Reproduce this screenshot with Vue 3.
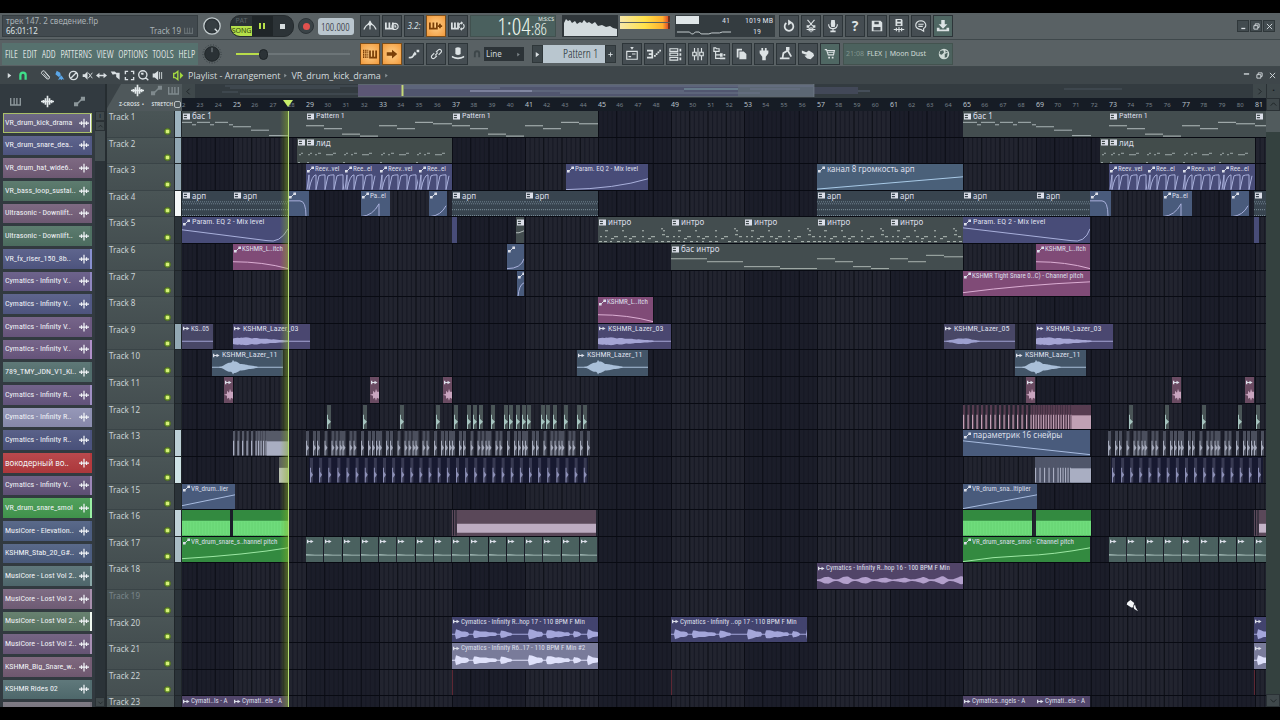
<script setup>
import { h, ref } from 'vue'

const icons = {
  metronome: [['M1 12Q3 7 7 5.500M15 12Q13 7 9 5.500M8 2V12', 's'], ['M5 6L8 2L11 6L8 8Z', 'f']],
  pianoClock: [['M1 4V11H9V4M5 4V10', 's2'], ['M15 8.500A3.500 3.500 0 1 1 8 8.500A3.500 3.500 0 1 1 15 8.500M11.500 6.500V9H13', 's']],
  pianoPlus: [['M1 4V11H9V4M5 4V10', 's2'], ['M10 8H15M12.500 5.500V10.500', 's2']],
  pianoLoop: [['M1 4V11H8V4M4.500 4V10', 's2'], ['M10 10A3.200 3.200 0 0 1 12 4.500M14 6A3.200 3.200 0 0 1 12 11.500', 's'], ['M11.500 2.500L14 4.500L11.500 6.500ZM12.500 9.500L10 11.500L12.500 13.500Z', 'f']],
  typing: [['M0 4H6M0 6.500H6M0 9H6M0 11.500H6', 'dash'], ['M8 4V12H15V4M11.500 4V11', 's2']],
  arrow: [['M2 6H8V3L14 8L8 13V10H2Z', 'f']],
  glide: [['M2 12Q7 13 8 8', 's2'], ['M7 8L9 5L11 8L9 10ZM11 3H14V6H11Z', 'f']],
  link: [['M7 9.500L10 6.500M6 7L3 10A2.200 2.200 0 0 0 6 13L9 10M8 6L11 3A2.200 2.200 0 0 1 14 6L11 9', 's']],
  stamp: [['M5 1Q8 -0.500 11 1L11 8Q8 10 5 8ZM1 10Q8 14 15 10V12Q8 16 1 12Z', 'f']],
  magnet: [['M3 13V7A5 5 0 0 1 13 7V13H10V7A2 2 0 0 0 6 7V13Z', 'f']],
  loop: [['M5 4.500A5 5 0 1 0 11 4.500', 's2'], ['M7 0.500L12 4L7 7.500Z', 'f']],
  cut: [['M4 1L10 8M12 1L6 8M3 12H13M6 10V14M8 9V15M10 10V14', 's'], ['M3 7H6V10H3ZM10 7H13V10H10Z', 'f']],
  mic: [['M6 1H10Q11 5 10 9H6Q5 5 6 1ZM5 13H11V15H5Z', 'f'], ['M3 6Q3 11 8 11Q13 11 13 6M8 11V14', 's']],
  save: [['M2 2H12L14 4V14H2ZM5 3V6H10V3ZM4 9V13H12V9Z', 'f']],
  saveWave: [['M4 0H11L12 1V8H4ZM6 1V3H10V1ZM6 5V7H10V5Z', 'f'], ['M2 12H14M5 10V14M8 9V15M11 10V14', 's']],
  chat: [['M8 2A6 5 0 1 0 8 12L11 14V11A6 5 0 0 0 8 2ZM5 6H11M5 8.500H10', 's']],
  download: [['M6 1H10V6H13L8 11L3 6H6ZM1 10H4V12H12V10H15V14H1Z', 'f']],
  playlist: [['M2 5H14V14H2ZM4 11H7M8 8H12', 's'], ['M6 0H10L8 3Z', 'f']],
  steps: [['M0 3H7V13H0V11H5V9H2V7H5V5H0ZM8 9H10V11H8ZM10 7H12V9H10ZM12 5H14V7H12ZM14 3H16V5H14Z', 'f']],
  rack: [['M1 2H10V5H1ZM1 7H10V10H1ZM1 12H10V15H1Z', 's'], ['M12 2H14V5H12ZM12 7H14V10H12ZM12 12H14V15H12Z', 'f']],
  mixer: [['M4 1V6M4 10V15M8 1V15M12 1V6M12 10V15', 's'], ['M2 6H6V10H2ZM10 6H14V10H10Z', 's']],
  tree: [['M1 1H3L4 2H7V5H1ZM3 5V13H8M3 9H8', 's'], ['M8 7H11V11H8ZM8 12H14V14H8ZM12 8H14V10H12Z', 'f']],
  copy: [['M2 2H8V4H4V12H2ZM5 5H10L13 8V14H5Z', 'f']],
  plug: [['M5 1H7V4H9V1H11V4H13V7L10 11V15H6V11L3 7V4H5Z', 'f']],
  robot: [['M4 13L5 7L10 4L14 11', 's2'], ['M1 12H12V14H1ZM8 0H12V4H8Z', 'f']],
  hand: [['M1 4L6 6L9 4L14 7L15 10L11 14L7 13L4 10L7 9L1 7Z', 'f']],
  cart: [['M2 3H4L6 9H12L13 4H5M6 6H13', 's'], ['M6 11H8V13H6ZM10 11H12V13H10Z', 'f']],
  globe: [['M8 1A7 7 0 1 0 8 15A7 7 0 1 0 8 1ZM3 4L7 3L8 6L5 9L2 8ZM9 8L13 6L12 12L9 13ZM10 3L13 5L10 6Z', 'f']],
  pencil: [['M3 2L6 1L14 10L13 13L10 13L2 5ZM5 5L11 12M7 3L13 10', 's']],
  brush: [['M4 1L9 4L10 8L7 10L2 6ZM8 10L11 8L15 14L12 13L11 15L9 13L6 15Z', 'f']],
  no: [['M8 2A6 6 0 1 0 8 14A6 6 0 1 0 8 2ZM4 12L12 4', 's2']],
  mute: [['M1 6H4L8 2V14L4 10H1Z', 'f'], ['M9 4L15 12M15 4L9 12', 's']],
  slip: [['M0 8L5 4V7H11V4L16 8L11 12V9H5V12Z', 'f']],
  slice: [['M1 2H7L9 4H14V14L9 10V6H6L4 7Z', 'f']],
  select: [['M2 6V2H6M10 2H14V6M14 10V14H10M6 14H2V10', 's2']],
  zoom: [['M7 1A6 6 0 1 0 7 13A6 6 0 1 0 7 1ZM11 11L15 15', 's2'], ['M4 4H8V7H5Z', 'f']],
  speaker: [['M1 5H4L9 1V15L4 11H1Z', 'f'], ['M11 3V13M14 3V13', 's']],
  sound: [['M7 2L3 5H1V11H3L7 14Z', 's2'], ['M10 3L15 8L10 13Z', 'f']],
  piano: [['M1 3V13H15V3M6 3V12M10 3V12', 's2']],
  wave: [['M0 8H16M3 6V10M5.500 4V12M8 1V15M10.500 4V12M13 6V10', 's2']],
  smallWave: [['M0 8H16M4 5V11M8 1V15M12 5V11', 's2']],
  auto: [['M4 12L12 4', 's2'], ['M0 9H6V15H0ZM10 1H16V7H10Z', 'f']],
  pattern: [['M0 1H16V15H0ZM2 4V7H9V4ZM2 9V12H9V9Z', 'f']],
  audio: [['M0 4H3V7H8V4L15 8L8 12V9H3V12H0Z', 'f']],
  min: [['M3 11H12V14H3Z', 'f']],
  minTop: [['M2 3H14V6H2Z', 'f']],
  restore: [['M2 6H11V14H2ZM5 6V2H14V10H11', 's2']],
  close: [['M2 2L14 14M14 2L2 14', 's2']],
  left: [['M10 3L5 8L10 13', 's']],
  right: [['M6 3L11 8L6 13', 's']],
  up: [['M3 10L8 5L13 10', 's']],
  down: [['M3 6L8 11L13 6', 's']],
  tri: [['M4 2L12 8L4 14Z', 'f']],
  plus: [['M3 8H13M8 3V13', 's2']],
  cursor: [['M2 3L6 0L11 4L9 10L7 10L1 6ZM10 9L12 6L13 10L16 15L11 12Z', 'f']]
}
const Icon = (props) =>
  h('svg', { viewBox: '0 0 16 16', 'aria-hidden': 'true' }, icons[props.n].map(([d, m]) =>
    h('path', m === 'f'
      ? { d, fill: 'currentColor', 'fill-rule': 'evenodd' }
      : { d, fill: 'none', stroke: 'currentColor', 'stroke-width': m === 's' ? 1.3 : 2, 'stroke-dasharray': m === 'dash' ? '1.500 1' : null })))
Icon.props = ['n']

const menu = ['FILE', 'EDIT', 'ADD', 'PATTERNS', 'VIEW', 'OPTIONS', 'TOOLS', 'HELP']
const recTools = [['metronome'], ['pianoClock'], ['count'], ['pianoPlus', 1], ['pianoLoop']]
const editTools = [['typing', 1], ['arrow', 1], ['glide'], ['link'], ['stamp']]
const fileTools = ['loop', 'cut', 'mic', 'help', 'save', 'saveWave', 'chat', 'download']
const viewTools = ['playlist', 'steps', 'rack', 'mixer', 'tree', 'copy', 'plug', 'robot', 'hand', 'cart']
const plTools = ['pencil', 'brush', 'no', 'mute', 'slip', 'slice', 'select', 'zoom', 'speaker']
const tempo = ref('100.000')
const volume = ref(22)
const snap = ref('Line')

const picker = [
  ['VR_drum_kick_drama', '#625d7c', '#f2f4f6'], ['VR_drum_snare_dea..', '#515884'], ['VR_drum_hat_wide6..', '#735d78'],
  ['VR_bass_loop_sustai..', '#507163'], ['Ultrasonic - Downlift..', '#735d78'], ['Ultrasonic - Downlift..', '#4f7163'],
  ['VR_fx_riser_150_8b..', '#515884', '#8890d0'], ['Cymatics - Infinity V..', '#615682', '#9087c0'], ['Cymatics - Infinity V..', '#515884'],
  ['Cymatics - Infinity V..', '#6b5880'], ['Cymatics - Infinity V..', '#6b5880', '#b08fc8'], ['789_TMY_JDN_V1_Ki..', '#516d6c'],
  ['Cymatics - Infinity R..', '#665680', '#a08fc4'], ['Cymatics - Infinity R..', '#8d8fb2'], ['Cymatics - Infinity R..', '#4c547f'],
  ['вокодерный во..', '#b43a3e'], ['Cymatics - Infinity V..', '#62537a', '#9c86b8'], ['VR_drum_snare_smol', '#43994f', '#9af0a4'],
  ['MusiCore - Elevation..', '#4c5d80'], ['KSHMR_Stab_20_G#..', '#4c5d80'], ['MusiCore - Lost Vol 2..', '#526b70', '#8aa8a8'],
  ['MusiCore - Lost Vol 2..', '#74607a', '#a88fae'], ['MusiCore - Lost Vol 2..', '#5b7764', '#f0f8f0'], ['MusiCore - Lost Vol 2..', '#6a587a', '#a88fb4'],
  ['KSHMR_Big_Snare_w..', '#745c74'], ['KSHMR Rides 02', '#526d70'], ['', '#74707a']
]

/* timeline scale: bar 22 sits four pixels before the left edge */
const BAR = 18.25
const LEFT = 182
const barX = (b) => 598 - LEFT + (b - 45) * BAR
const bars = Array.from({ length: 60 }, (_, i) => i + 22)
const numbers = bars.map((n) => ({ n: n === 22 ? '2' : n, x: Math.max(0, barX(n)), major: n % 4 === 1 }))

/* clip artwork */
const notes = (list, o = 0) => list.map(([x, y, w]) => `M${x + o} ${y}h${w}`).join('')
const line = (d, s = '#a9b0dc') => ({ d, s })
const wave = (w, env, f, mid = 17.5, from = 0) => {
  let a = '', b = ''
  for (let x = from; x <= w; x++) {
    const e = Math.max(0.4, env(x) * (0.8 + 0.2 * Math.abs(Math.sin(x * 12.9))))
    a += `${a ? 'L' : 'M'}${x} ${(mid - e).toFixed(1)}`
    b = `L${x} ${(mid + e).toFixed(1)}` + b
  }
  return { d: a + b + 'Z', f }
}
const hits = (xs, w, bg, fg, full) => [
  { d: xs.map((x) => `M${x} 1h${w}v25h-${w}Z`).join(''), f: bg },
  { d: xs.map((x) => full ? `M${x} 11h${w / 2}v15h-${w / 2}Z` : `M${x} 11h1v4l${w - 1} 3l-${w - 1} 3v5h-1Z`).join(''), f: fg }
]
const bass = () => [line(notes([[0, 11.5, 14], [14, 14, 4], [18, 11.5, 14], [32, 14, 4], [37, 11.5, 13], [50, 14, 4], [55, 11.5, 13], [69, 14, 4], [73, 16, 18], [91, 19.5, 18], [109, 25, 19]]), '#aab4b6')]
const patt = () => [line(notes([[0, 15, 18], [18, 18, 18], [36, 23.5, 18], [54, 25.5, 18], [73, 15, 18], [91, 18, 18], [109, 11.5, 18], [127, 13, 19]]), '#b4bdbe')]
const leadNotes = [0, 36, 73, 109].flatMap((o) => [[2, 17, 2], [4, 15.5, 2], [9, 17, 2], [12, 15.5, 3], [20, 17, 5], [25, 17, 2], [27, 15.5, 3], [1, 25, 2]].map(([x, y, w]) => [x + o, y, w]))
const lead = () => [line(notes(leadNotes), '#9fa9a9')]
const arp = (w) => [{ d: `M0 11H${w}M1 13H${w}`, s: '#6f828f', dash: '1 1' }, { d: `M0 19H${w}M0 25H${w}`, s: '#7c8f9b', dash: '1 1' }]
const intro = () => [line(notes([[2, 20, 2], [1, 25, 3], [7, 14, 3], [7, 20, 2], [6, 25, 3], [13, 22, 3], [16, 20, 4], [12, 25, 2], [19, 25, 3], [24, 14, 2], [26, 20, 3], [25, 25, 2], [31, 22, 3], [34, 20, 4], [31, 25, 2], [38, 25, 3], [44, 14, 2], [44, 20, 2], [44, 25, 3], [50, 22, 3], [53, 20, 4], [57, 25, 3], [63, 12, 2], [65, 14, 2], [64, 18, 3], [68, 20, 3], [63, 25, 3], [69, 25, 3]]), '#b4beb9')]
const bassIntro = () => [line(notes([[0, 15, 36], [36, 18, 36], [73, 23, 36], [109, 25, 37], [146, 15, 18], [164, 18, 18], [182, 23, 18], [200, 25, 18], [219, 15, 18], [237, 18, 18], [255, 11.5, 18], [273, 13, 19]]), '#aab4b0')]
const verb = (w) => {
  let d = `M1 26L3 11V26`
  for (let x = 5; x < w - 5; x += 9) d += `Q${x + 1} 11 ${x + 5} 11V26L${x + 8} 12`
  return [line(d)]
}
const spike = () => [line('M0 26Q12 25 18 13V26H22')]
const lz3 = () => [wave(77, (x) => x < 8 ? 3.5 : Math.max(0.4, 5 * (1 - x / 66)), '#a5a5d4')]
const lz5 = () => [wave(71, (x) => 3.2 * Math.exp(-(((x - 19) / 13) ** 2)), '#9da0cf')]
const lz11 = () => [wave(72, (x) => (x === 21 ? 8 : 6 * Math.exp(-(((x - 21) / 9) ** 2)) + 2 * Math.exp(-(((x - 36) / 9) ** 2))), '#a9bfd8')]
const vox = (w, f, cut = 0) => {
  const bumps = [[4, 16, 5], [22, 44, 4], [49, 59, 4], [77, 90, 5.5], [95, 117, 4.5], [122, 128, 4], [136, 146, 5]]
  return [wave(w, (x) => {
    const b = bumps.find(([s, e]) => x + cut >= s && x + cut <= e)
    return b ? b[2] * (1 - 0.6 * (x + cut - b[0]) / (b[1] - b[0])) : 0.4
  }, f)]
}
const star = () => [{ d: 'M0 18L3 17L3 14L5 16L6 12L7 15H9V22L7 21L6 24L5 21L3 22V19Z', f: '#c9a5bf' }]
const kicks = (from, to) => {
  const out = []
  for (let s = 0; s < to - from; s += 36.5) for (const o of [0, 7, 11, 18.5, 25.5, 29.5, 33.5]) if (s + o < to - from - 2) out.push(s + o)
  return hits(out, 3, '#4b4f5d', '#a6abbc')
}
const claps = (w) => {
  const out = []
  for (let x = 1; x < w; x += 9.125) out.push(x)
  return hits(out, 3, '#383a52', '#8e91b8')
}
const roll = (w, solid, bg, fg) => {
  const xs = []
  for (let x = 0; x < solid; x += x > solid * 0.6 ? 2.5 : 4.5) xs.push(x)
  return [...hits(xs, 2.2, bg, fg, true), { d: `M${solid} 1H${w}V26H${solid}Z`, f: bg }, { d: `M${solid} 11.500H${w}V26H${solid}Z`, f: fg }]
}

const C = { pat: '#434d4f', lead: '#424c4b', arp: '#38444f', auto: '#484c78', blue: '#495b7c', sky: '#4a6079', pink: '#804b77', laz: '#4a4770', laz5: '#484766', steel: '#435568', rose: '#6a4b62', green: '#338a40', teal: '#4a615f', vio: '#514468', vox: '#42436e', light: '#797b9a', none: 'transparent' }
const c = (x, e, kind, color, label = '', art = [], cut = 0) => ({ x: x - LEFT, w: e - x, kind, color, label, art, cut })
const eq = () => [line('M0 13L85 24Q98 27 106 12')]
const greens = (w) => [{ d: `M0 11H${w}V26H0Z`, f: '#6fdc7c' }, { d: Array.from({ length: Math.floor(w / 3) }, (_, i) => `M${i * 3 + 1} 12V26`).join(''), s: '#67d474' }]
const cells = (x, n) => Array.from({ length: n }, (_, i) => c(x + i * BAR, x + (i + 1) * BAR - 1, 'audio', C.teal, '', [{ d: 'M0 17.500L9 18H17V18.800H0Z', f: '#b8d0cc' }]))
const verbs = (o) => [c(306 + o, 344 + o, 'auto', C.auto, 'Reev..vel', verb(38)), c(344 + o, 379 + o, 'auto', C.auto, 'Ree..el', verb(35)), c(379 + o, 418 + o, 'auto', C.auto, 'Reev..vel', verb(39)), c(418 + o, 452 + o, 'auto', C.auto, 'Ree..el', verb(34))]
const drops = (o) => [c(288 + o, 309 + o, 'auto', C.blue, '', [line('M0 10H12Q18 10 18 26H21')]), c(361 + o, 390 + o, 'auto', C.blue, 'Pa..el', spike()), c(429 + o, 447 + o, 'auto', C.blue, '', [line('M1 26Q12 25 17 15')])]
const tails = (xs) => xs.map((x) => c(x, x + 9, 'audio', C.rose, '', star()))
const sparse = [327, 363, 400, 436, 454, 467, 473, 479, 491, 504, 509, 516, 522, 527, 541, 546, 553, 564, 577, 583]
const arps = (list) => list.map(([a, b]) => c(a, b, 'pattern', C.arp, b - a > 20 ? 'арп' : '', arp(b - a)))
const red = (x) => c(x, x + 1, '', '#5e2733')

const tracks = [
  { tab: '#9db3bf', clips: [c(182, 306, 'pattern', C.pat, 'бас 1', bass(), 22), c(306, 452, 'pattern', C.pat, 'Pattern 1', patt()), c(452, 598, 'pattern', C.pat, 'Pattern 1', patt()), c(963, 1109, 'pattern', C.pat, 'бас 1', bass()), c(1109, 1255, 'pattern', C.pat, 'Pattern 1', patt()), c(1255, 1290, 'pattern', C.pat, '', patt())] },
  { tab: '#92a8b4', clips: [0, 803].flatMap((o) => [c(297 + o, 306 + o, 'pattern', C.lead, '', lead()), c(306 + o, 452 + o, 'pattern', C.lead, 'лид', lead())]) },
  { tab: '#8da2ae', clips: [...verbs(0), c(566, 648, 'auto', C.auto, 'Param. EQ 2 - Mix level', [line('M0 26Q50 25 82 15')]), c(817, 963, 'auto', C.sky, 'канал 8 громкость арп', [line('M0 25.500L146 13', '#a9cbe8')]), ...verbs(803)] },
  { tab: '#f4f7f8', clips: [...arps([[182, 233], [233, 288], [452, 525], [525, 598], [817, 890], [890, 963], [963, 1036], [1036, 1090], [1254, 1266]]), ...drops(0), ...drops(802)] },
  { clips: [c(182, 288, 'auto', C.auto, 'Param. EQ 2 - Mix level', eq()), c(452, 457, '', C.auto), c(516, 524, 'pattern', C.pat, '', [line('M0 16H3L8 14', '#b4bdbe')]), ...[598, 671, 744, 817, 890].map((x) => c(x, x + 73, 'pattern', C.pat, 'интро', intro())), c(963, 1090, 'auto', C.auto, 'Param. EQ 2 - Mix level', [line('M0 11L108 24Q122 27 127 12')]), c(1254, 1259, '', C.auto)] },
  { clips: [c(233, 288, 'auto', C.pink, 'KSHMR_L..itch', [line('M0 18Q30 18 55 25', '#dcaed4')]), c(507, 524, 'auto', C.blue, '', [line('M0 25Q14 25 17 15')]), c(671, 963, 'pattern', C.pat, 'бас интро', bassIntro()), c(1036, 1090, 'auto', C.pink, 'KSHMR_L..itch', [line('M0 18Q30 18 54 25', '#dcaed4')])] },
  { clips: [c(517, 524, 'auto', C.blue, '', [line('M1 26Q2 14 7 12')]), c(963, 1090, 'auto', C.pink, 'KSHMR Tight Snare 0..C) - Channel pitch', [line('M0 22Q60 14 127 11', '#dcaed4')])] },
  { clips: [c(598, 653, 'auto', C.pink, 'KSHMR_L..itch', [line('M0 18Q30 18 55 25', '#dcaed4')])] },
  { tab: '#93a8b4', clips: [c(182, 213, 'audio', C.laz5, 'KS..05', [wave(31, () => 0.6, '#9da0cf')]), c(233, 310, 'audio', C.laz, 'KSHMR_Lazer_03', lz3()), c(598, 671, 'audio', C.laz, 'KSHMR_Lazer_03', lz3()), c(944, 1015, 'audio', C.laz5, 'KSHMR_Lazer_05', lz5()), c(1036, 1113, 'audio', C.laz, 'KSHMR_Lazer_03', lz3())] },
  { clips: [212, 577, 1015].map((x) => c(x, x + 71, 'audio', C.steel, 'KSHMR_Lazer_11', lz11())) },
  { clips: tails([224, 370, 443, 1026, 1172, 1245]) },
  { clips: [c(327, 590, '', C.none, '', hits(sparse.map((x) => x - 327), 4, '#4a5557', '#a5c4bf')), c(963, 1091, '', C.none, '', roll(128, 109, '#573c50', '#c0a0b4')), c(1129, 1266, '', C.none, '', hits([0, 36, 73, 109, 127], 4, '#4a5557', '#a5c4bf'))] },
  { tab: '#bccfd6', clips: [c(233, 289, '', C.none, '', roll(56, 34, '#565a68', '#a9aec2')), c(306, 590, '', C.none, '', kicks(306, 590)), c(963, 1090, 'auto', C.blue, 'параметрик 16 снейры', [line('M0 11L127 25', '#a9bce0')]), c(1108, 1264, '', C.none, '', kicks(1108, 1264))] },
  { tab: '#cfe3e6', clips: [c(279, 288, '', '#5e635f', '', [{ d: 'M0 11H9V26H0Z', f: '#b9c2b0' }]), c(309, 588, '', '#171930', '', claps(279)), c(1035, 1091, '', '#50566a', '', roll(56, 36, '#50566a', '#a9aec2')), c(1111, 1263, '', '#171930', '', claps(152))] },
  { clips: [c(182, 235, 'auto', C.blue, 'VR_drum..lier', [line('M0 22L53 11', '#a9bce0')]), c(963, 1037, 'auto', C.blue, 'VR_drum_sna..ltiplier', [line('M0 25L74 11', '#a9bce0')])] },
  { tab: '#c0d2d8', clips: [c(182, 230, '', C.green, '', greens(48)), c(233, 288, '', C.green, '', greens(55)), c(452, 596, '', '#5a4859', '', [{ d: 'M5 14H144V23H5Z', f: '#bcabc0' }, { d: 'M1.500 0V26M4 0V26', s: '#1b1e29' }]), c(963, 1032, '', C.green, '', greens(69)), c(1036, 1091, '', C.green, '', greens(55)), c(1254, 1266, '', '#5a4859', '', [{ d: 'M5 14H12V23H5Z', f: '#c4b4c8' }, { d: 'M1.500 0V26M4 0V26', s: '#1b1e29' }])] },
  { tab: '#a9bcc4', clips: [c(182, 288, 'auto', C.green, 'VR_drum_snare_s..hannel pitch', [line('M0 22Q65 18 106 11', '#9de8a4')]), ...cells(306, 16), c(963, 1090, 'auto', C.green, 'VR_drum_snare_smol - Channel pitch', [line('M0 25Q30 20 60 19T127 11', '#9de8a4')]), ...cells(1109, 9)] },
  { clips: [c(817, 963, 'audio', C.vio, 'Cymatics - Infinity R..hop 16 - 100 BPM F Min', [wave(146, (x) => 1 + (2.5 + Math.sin(x / 17)) * Math.abs(Math.sin(x / 6.1)) ** 3, '#b3a0cc')])] },
  { dim: true, clips: [] },
  { clips: [c(452, 598, 'audio', C.vox, 'Cymatics - Infinity R..hop 17 - 110 BPM F Min', vox(146, '#a4a6da')), c(671, 807, 'audio', C.vox, 'Cymatics - Infinity ..op 17 - 110 BPM F Min', vox(136, '#a4a6da')), c(1254, 1266, 'audio', C.vox, '', vox(12, '#a4a6da'))] },
  { clips: [c(452, 598, 'audio', C.light, 'Cymatics - Infinity R6..17 - 110 BPM F Min #2', vox(146, '#dfe1fa')), c(1254, 1266, 'audio', C.light, '', vox(12, '#dfe1fa'))] },
  { clips: [red(452), red(671), red(1254)] },
  { clips: [c(182, 233, 'audio', '#51456a', 'Cymati..ls - A'), c(233, 288, 'audio', '#51456a', 'Cymati..els - A'), c(963, 1036, 'audio', '#51456a', 'Cymatics..ngels - A'), c(1036, 1090, 'audio', '#51456a', 'Cymati..els - A')] }
]
const isCyr = (t) => /[а-я]/.test(t)
/* labels that fill their clip are set a size smaller */
const isDense = (k) => k.label.length * 4 > k.w - 12
const px = (n) => n + 'px'
</script>

<template>
  <main class="app">
    <header class="toolbar">
      <div class="bar">
        <div class="info">
          <div>трек 147. 2 сведение.flp</div>
          <div class="info-row"><b>66:01:12</b><span>Track 19</span><Icon n="piano" class="i9" /></div>
        </div>
        <div class="knob-cell">
          <svg class="knob" viewBox="0 0 22 22" role="img" aria-label="Main volume"><circle cx="11" cy="11" r="9" fill="#2d3438" stroke="#c5ced0" stroke-width="1.400" /><circle cx="11" cy="11" r="6.500" fill="#363e42" /><path d="M14 14L17 17" stroke="#dfe6e8" stroke-width="1.500" /></svg>
        </div>
        <div class="transport">
          <button class="mode"><span>PAT</span><span class="song">SONG</span></button>
          <button class="tb pause" aria-label="Pause"><i></i><i></i></button>
          <button class="tb" aria-label="Stop"><i class="stop"></i></button>
        </div>
        <button class="rec" aria-label="Record"><i></i></button>
        <input v-model="tempo" class="tempo" aria-label="Tempo" />
        <div class="group g6">
          <button v-for="[n, on] in recTools" :key="n" class="tool" :class="{ on }" :aria-label="n">
            <span v-if="n === 'count'" class="count">3.2:</span><Icon v-else :n="n" class="i16" />
          </button>
        </div>
        <div class="clock"><span class="big">1:04</span><span class="cs">:86</span><small>M:S:CS</small></div>
        <svg class="scope" viewBox="0 0 56 22" aria-hidden="true"><path d="M2 21V8L4 4L6 6L8 5L10 8L13 6L15 9L18 7L20 8L22 5L25 8L27 7L30 9L33 7L36 11L40 10L44 12L48 11L51 13L55 14V21Z" fill="#d3dbde" /></svg>
        <div class="meter"><i></i><i></i></div>
        <div class="cpu">
          <i class="load"></i><span class="n41">41</span><span>1019 MB</span>
          <svg viewBox="0 0 58 8" aria-hidden="true"><path d="M1 4H14L16 6H18L20 4H24L26 6H34L37 5H45L48 4H57" fill="none" stroke="#c8d0d2" /></svg><span class="n19">19</span>
        </div>
        <div class="group g4">
          <button v-for="n in fileTools" :key="n" class="tool" :class="{ teal: n === 'download' }" :aria-label="n">
            <span v-if="n === 'help'" class="q">?</span><Icon v-else :n="n" class="i16" />
          </button>
        </div>
        <div class="win">
          <button aria-label="Minimize"><Icon n="min" class="i7" /></button><button aria-label="Restore"><Icon n="restore" class="i7" /></button><button aria-label="Close"><Icon n="close" class="i7" /></button>
        </div>
      </div>
      <div class="bar second">
        <nav class="menu"><button v-for="m in menu" :key="m">{{ m }}</button></nav>
        <div class="knob-cell">
          <svg class="knob" viewBox="0 0 22 22" role="img" aria-label="Main pitch"><circle cx="11" cy="11" r="10" fill="none" stroke="#2e363a" stroke-dasharray="1 2" /><circle cx="11" cy="11" r="8" fill="#2a3135" stroke="#1e2427" /><path d="M11 4V9" stroke="#8d979a" /></svg>
        </div>
        <div class="slide"><input v-model="volume" type="range" aria-label="Song position" /></div>
        <div class="group g6">
          <button v-for="[n, on] in editTools" :key="n" class="tool" :class="{ on }" :aria-label="n"><Icon :n="n" class="i16" /></button>
        </div>
        <Icon n="magnet" class="i10 snapicon" />
        <div class="snapbox"><select v-model="snap" class="snap" aria-label="Snap"><option>Line</option><option>Bar</option></select><Icon n="tri" class="i5" /></div>
        <div class="patsel">
          <button class="side" aria-label="Pattern menu"><Icon n="tri" class="i7" /></button>
          <button class="patname">Pattern 1</button>
          <button class="side" aria-label="Add pattern"><Icon n="plus" class="i7" /></button>
        </div>
        <div class="group g6">
          <button v-for="n in viewTools" :key="n" class="tool" :class="{ teal: n === 'cart' }" :aria-label="n"><Icon :n="n" class="i16" /></button>
        </div>
        <div class="news"><span class="date">21:08</span><span>FLEX | Moon Dust</span><Icon n="globe" class="i12" /></div>
      </div>
    </header>

    <div class="titlebar">
      <Icon n="tri" class="i7 tri0" /><Icon n="magnet" class="i12 green" />
      <div class="pltools"><button v-for="n in plTools" :key="n" :aria-label="n" :class="{ blue: n === 'brush' }"><Icon :n="n" class="i11" /></button></div>
      <Icon n="sound" class="i11 lime" />
      <span class="crumb">Playlist - Arrangement</span><Icon n="tri" class="i5" /><span class="crumb">VR_drum_kick_drama</span><Icon n="tri" class="i5" />
      <div class="plwin"><button aria-label="Minimize"><Icon n="minTop" class="i7" /></button><button aria-label="Restore"><Icon n="restore" class="i7" /></button><button aria-label="Close"><Icon n="close" class="i7" /></button></div>
    </div>

    <div class="body">
      <aside class="picker">
        <div class="tabs"><Icon n="piano" class="i11" /><Icon n="wave" class="i13 lit" /><Icon n="auto" class="i11" /></div>
        <div class="picker-body">
          <div class="items">
            <button v-for="([name, color, edge], i) in picker" :key="i" class="item" :class="{ first: i === 0 }" :style="{ backgroundColor: color, borderRightColor: edge || color }">
              <span :class="{ cyr: isCyr(name) }">{{ name }}</span><Icon n="smallWave" class="i10" />
            </button>
          </div>
          <div class="vscroll">
            <span class="sb">ı</span><span class="sb"><Icon n="up" class="i7" /></span><i class="thumb"></i><span class="sb end"><Icon n="down" class="i7" /></span>
          </div>
        </div>
      </aside>

      <section class="heads">
        <div class="headtop">
          <div class="hicons"><Icon n="wave" class="i13 lit" /><Icon n="auto" class="i11" /><Icon n="piano" class="i11" /></div>
          <div class="opts"><span>Z-CROSS&nbsp; •</span><label>STRETCH<input type="checkbox" /></label></div>
        </div>
        <div class="clipbox">
          <div class="rows">
            <div v-for="(t, i) in tracks" :key="i" class="head" :class="{ dim: t.dim }">
              <span>Track {{ i + 1 }}</span>
              <button class="led" :aria-label="'Mute track ' + (i + 1)"></button>
              <i class="tab" :style="{ backgroundColor: t.tab || '#2b3339' }"></i>
            </div>
          </div>
        </div>
      </section>

      <section class="timeline">
        <div class="overview">
          <button aria-label="Scroll left"><Icon n="left" class="i9" /></button>
          <div class="map">
            <svg viewBox="195 0 1058 13" preserveAspectRatio="none" aria-hidden="true">
              <path d="M225 2H358M230 4H340M222 8H238M240 10H358M1064 5H1122" stroke="#4a545d" fill="none" />
              <path d="M358 1H738V12H358Z" fill="#51566f" /><path d="M738 1H814V12H738Z" fill="#5c6774" /><path d="M814 3H858V10H814Z" fill="#424858" />
              <path d="M358 1H402V12H358Z" fill="#5c5775" />
              <path d="M404 2H813M404 4H500M520 7H684M560 9H760M750 5H800" stroke="#6a7488" fill="none" />
              <path d="M470 7H532" stroke="#a5a9c8" /><path d="M684 5H738" stroke="#7fa0a8" /><path d="M858 7H870" stroke="#596272" />
              <path d="M814 0V13M358 0.500H814M358 12.500H814" stroke="#7b8592" fill="none" opacity=".6" />
              <path d="M401.500 1H403.500V12H401.500Z" fill="#c4d878" />
            </svg>
          </div>
          <button aria-label="Scroll right"><Icon n="right" class="i9" /></button><button class="dot" aria-label="Options">•</button>
        </div>
        <div class="lower">
          <div class="canvas">
            <div class="ruler">
              <span v-for="b in numbers" :key="b.x" :class="{ major: b.major }" :style="{ left: px(b.x) }">{{ b.n }}</span>
              <svg class="head-mark" viewBox="0 0 12 9" aria-hidden="true"><path d="M1 1H11L6 8Z" fill="#c8ee6a" /></svg>
            </div>
            <div class="clipbox">
              <svg class="grid" aria-hidden="true">
                <rect v-for="n in 8" :key="'s' + n" :x="barX(17 + n * 8)" y="0" :width="BAR * 4" height="100%" fill="#22242f" />
                <template v-for="b in bars" :key="b">
                  <rect :x="barX(b)" y="0" width="1" height="100%" fill="#0b0d15" />
                  <rect v-for="q in 3" :key="q" :x="barX(b) + q * 4.56" y="0" width="1" height="100%" fill="#171924" />
                </template>
              </svg>
              <div class="rows">
                <div v-for="(t, i) in tracks" :key="i" class="lane">
                  <div v-for="(k, j) in t.clips" :key="j" class="clip" :style="{ left: px(k.x), width: px(k.w), backgroundColor: k.color }">
                    <svg class="art" :viewBox="`${k.cut} 0 ${k.w} 26`" preserveAspectRatio="none" aria-hidden="true">
                      <path v-for="(a, n) in k.art" :key="n" :d="a.d" :fill="a.f || 'none'" :stroke="a.s" :stroke-dasharray="a.dash" />
                    </svg>
                    <div v-if="k.kind" class="label" :class="{ dense: isDense(k), cyr: isCyr(k.label) }"><Icon :n="k.kind" class="i7" /><span>{{ k.label }}</span></div>
                  </div>
                </div>
              </div>
              <i class="playhead"></i>
              <Icon n="cursor" class="i12 pointer" />
            </div>
          </div>
          <div class="vscroll wide">
            <span class="sb"><Icon n="up" class="i9" /></span><i class="thumb"></i><span class="sb end"><Icon n="down" class="i9" /></span>
          </div>
        </div>
      </section>
    </div>
  </main>
</template>

<style>
html, body { margin: 0; background: #000; }
</style>
<style scoped>
* { box-sizing: border-box; }
button { padding: 0; border: 0; background: none; color: inherit; font: inherit; cursor: pointer; }
i { display: block; }
svg { display: block; flex: none; }
.app { --narrow: "Roboto Condensed", "Open Sans Condensed", Lato, sans-serif; --light: "Open Sans Condensed Light", "Open Sans Condensed", Lato, sans-serif; --wide: "Noto Sans", sans-serif; height: 100vh; padding: 13px 0; background: #000; color: #d9dfe2; display: flex; flex-direction: column; overflow: hidden; font: 8px/12px var(--narrow); }
.i5 { width: 5px; height: 5px; } .i7 { width: 7px; height: 7px; } .i9 { width: 9px; height: 9px; } .i10 { width: 10px; height: 10px; }
.i11 { width: 11px; height: 11px; } .i12 { width: 12px; height: 12px; } .i13 { width: 13px; height: 13px; } .i16 { width: 14px; height: 14px; }

.toolbar { flex: none; background: #596164; }
.bar { height: 27px; padding: 0 5px 0 2px; display: flex; align-items: center; border-bottom: 1px solid #3f484b; }
.bar > * { flex: none; }
.second { padding-top: 2px; }
.info { width: 196px; height: 22px; padding: 0 4px 0 3px; background: #424a4f; border: 1px solid #363e42; color: #a9b2b6; font: 8px/10px var(--wide); }
.info-row { display: flex; gap: 3px; }
.info-row b { flex: 1; font-weight: 400; color: #dde3e6; }
.info-row svg { color: #666f73; }
.knob-cell { width: 28px; display: flex; justify-content: center; }
.knob { width: 20px; height: 20px; }
.transport { width: 64px; height: 22px; margin-left: 4px; border-radius: 10px; overflow: hidden; display: flex; background: #2c3337; border: 1px solid #252b2e; }
.mode { width: 21px; display: flex; flex-direction: column; font: 7px/10px var(--wide); color: #5b6468; }
.song { background: #b4e04a; color: #33420f; }
.tb { flex: 1; display: flex; gap: 2px; align-items: center; justify-content: center; }
.tb i { width: 2px; height: 6px; background: #b8e04a; }
.tb .stop { width: 5px; height: 5px; background: #d6dcde; }
.pause { background: #1f2528; }
.rec { width: 16px; height: 16px; margin: 0 4px; border-radius: 50%; background: #3a4347; border: 1px solid #2c3337; display: flex; align-items: center; justify-content: center; }
.rec i { width: 7px; height: 7px; border-radius: 50%; background: #e2514e; }
.tempo { width: 36px; height: 17px; padding: 0 3px; border: 0; border-radius: 3px; background: #bac6ce; color: #1b2328; font: 11px/16px var(--light); }
.group { display: flex; gap: 2px; }
.g6 { margin-left: 6px; } .g4 { margin-left: 4px; }
.tool { width: 20px; height: 22px; border: 1px solid #2d3539; background: #454d52; color: #dce2e4; display: flex; align-items: center; justify-content: center; }
.tool.on { background: radial-gradient(#ffd08a, #f29a3c); border-color: #7d4d18; color: #7a3f08; }
.tool.teal { background: #4f6763; }
.count { font: italic 8px/12px var(--wide); }
.q { font: 700 14px/16px "Open Sans", sans-serif; }
.clock { width: 86px; height: 22px; margin-left: 2px; padding-right: 1px; background: #4a605e; border: 1px solid #41514f; color: #eaf4ec; display: flex; justify-content: flex-end; align-items: baseline; }
.big { font: 24px/20px var(--light); }
.cs { font: 16px/20px var(--light); }
.clock small { align-self: flex-start; width: 7px; display: flex; justify-content: flex-end; font: 5px/6px var(--wide); }
.scope { width: 56px; height: 22px; margin-left: 6px; background: #2f363a; }
.meter { width: 50px; height: 22px; margin-left: 2px; padding-top: 1px; }
.meter i { height: 6px; margin-bottom: 1px; background: linear-gradient(90deg, #f6e7a8, #ffe14a 50%, #ffb02e 85%, #e2592a 95%, #6b3220 96%); }
.cpu { width: 100px; height: 22px; margin-left: 5px; padding: 0 2px 0 1px; background: #343c40; display: grid; grid-template-columns: 26px 30px 1fr; grid-template-rows: 11px 11px; text-align: right; font: 8px/11px var(--narrow); }
.load { width: 23px; height: 8px; margin-top: 1px; background: #dfe6e8; }
.n41 { padding-right: 2px; }
.cpu svg { grid-column: 1 / 3; width: 56px; height: 8px; margin-top: 2px; }
.n19 { padding-right: 12px; }
.win { margin-left: auto; display: flex; gap: 1px; }
.win button { width: 12px; height: 12px; background: #424b4f; border: 1px solid #2f373a; display: flex; align-items: center; justify-content: center; }

.menu { width: 196px; height: 22px; padding: 0 3px; background: #56716e; display: flex; align-items: center; justify-content: space-between; color: #fff; font: 10px/14px var(--light); }
.slide { width: 124px; margin-left: 4px; padding: 0 4px 0 6px; display: flex; }
.slide input { width: 114px; height: 12px; margin: 0; appearance: none; background: linear-gradient(#b8dc4a, #b8dc4a) 0 50% / 24px 2px no-repeat, linear-gradient(#6d7578, #6d7578) 0 50% / 100% 2px no-repeat; }
.slide input::-webkit-slider-thumb { appearance: none; width: 9px; height: 11px; border-radius: 5px; background: #2c3337; border: 1px solid #1e2427; }
.snapicon { margin: 0 2px 0 4px; color: #3d4649; }
.snapbox { width: 40px; height: 14px; padding-right: 3px; background: #2c3337; color: #7d868a; display: flex; align-items: center; }
.snap { flex: 1; min-width: 0; height: 14px; padding: 0 2px; appearance: none; border: 0; background: none; color: #cfd6d9; font: 8px/14px var(--wide); }
.patsel { margin-left: 8px; display: flex; height: 18px; }
.side { width: 11px; background: #3d464a; border: 1px solid #2f373a; display: flex; align-items: center; justify-content: center; }
.patname { width: 62px; background: #b9c6cf; color: #20282d; text-align: right; padding-right: 7px; font: 12px/18px var(--light); }
.news { width: 110px; height: 22px; margin-left: 3px; padding: 0 2px; background: #4c625e; border: 1px solid #43534f; display: flex; align-items: center; gap: 3px; color: #cfdad6; font: 7px/12px var(--wide); white-space: nowrap; }
.news svg { margin-left: auto; }
.date { color: #82968f; }

.titlebar { height: 17px; flex: none; background: #3e464a; display: flex; align-items: center; padding: 0 4px 0 6px; }
.tri0 { margin-right: 4px; }
.green { color: #3fe08a; }
.lime { color: #a2d840; margin: 0 4px 0 9px; }
.blue { color: #5aa6e8; }
.pltools { display: flex; margin-left: 9px; }
.pltools button { width: 14px; display: flex; justify-content: center; }
.crumb { font: 9px/12px "Open Sans", sans-serif; margin-right: 3px; color: #d3dadd; }
.crumb + svg { margin-right: 3px; color: #8a9498; }
.plwin { margin-left: auto; display: flex; gap: 6px; }

.body { flex: 1; min-height: 0; display: flex; background: #323a40; }
.picker { width: 107px; flex: none; display: flex; flex-direction: column; border-right: 2px solid #262d31; }
.tabs { height: 27px; flex: none; padding: 8px 20px 0 10px; display: flex; justify-content: space-between; align-items: center; color: #8c969a; }
.lit { color: #e4eaec; }
.picker-body { flex: 1; min-height: 0; display: flex; overflow: hidden; }
.items { width: 92px; height: 612px; margin: 2px 3px 0 0; padding-left: 3px; display: grid; grid-template-rows: repeat(27, 1fr); }
.item { margin-bottom: 3px; min-width: 0; padding: 0 1px 0 2px; border-right: 2px solid; display: flex; align-items: center; justify-content: space-between; color: #f0f2f6; font: 8px/12px var(--narrow); white-space: nowrap; background-image: linear-gradient(rgba(255, 255, 255, .08), rgba(0, 0, 0, .05)); }
.item.first { outline: 1px solid #a9bf68; outline-offset: -1px; }
.item .cyr { font: 8px/12px var(--wide); }
.vscroll { width: 10px; flex: none; display: flex; flex-direction: column; background: #2b3338; }
.sb { height: 10px; flex: none; display: flex; align-items: center; justify-content: center; background: #3f484b; border: 1px solid #2a3135; color: #151a1c; font-size: 7px; }
.vscroll .thumb { height: 30px; background: #434d50; }
.end { margin-top: auto; }

.heads { width: 75px; flex: none; display: flex; flex-direction: column; background: #3a4246; }
.headtop { height: 27px; flex: none; padding-left: 12px; background: #4f585b; clip-path: polygon(0 100%, 0 90%, 14px 0, 100% 0, 100% 100%); }
.hicons { height: 13px; padding: 0 3px 0 12px; display: flex; align-items: center; justify-content: space-between; color: #7f898d; }
.opts { height: 14px; display: flex; align-items: center; justify-content: space-between; font: 700 5px/8px var(--wide); color: #cdd4d6; padding-right: 1px; }
.opts label { display: flex; align-items: center; gap: 1px; }
.opts input { appearance: none; width: 7px; height: 7px; margin: 0; border: 1px solid #b9c1c4; border-radius: 2px; }
.clipbox { flex: 1; min-height: 0; position: relative; overflow: hidden; }
.rows { height: 612px; display: grid; grid-template-rows: repeat(23, 1fr); position: relative; }
.head { position: relative; border-bottom: 1px solid #3a4447; background: linear-gradient(#4a5556, #454f51); padding: 0 0 0 2px; display: flex; }
.head span { flex: 1; font: 8px/12px var(--wide); color: #cbd3d5; }
.head.dim span { color: #79858a; }
.led { width: 7px; height: 7px; align-self: flex-end; margin: 0 4px 2px 0; border-radius: 50%; background: radial-gradient(#d8f078 35%, #7da838 40%, #3f5522 75%); }
.tab { width: 6px; margin: 0 1px 0 0; outline: 1px solid #20262a; }

.timeline { flex: 1; min-width: 0; display: flex; flex-direction: column; }
.overview { height: 14px; flex: none; display: flex; background: #333b40; }
.overview button { width: 13px; background: #3f484b; color: #15191b; display: flex; align-items: center; justify-content: center; }
.overview .dot { width: 14px; border-left: 1px solid #2a3135; }
.map { flex: 1; min-width: 0; }
.map svg { width: 100%; height: 13px; }
.lower { flex: 1; min-height: 0; display: flex; }
.canvas { flex: 1; min-width: 0; display: flex; flex-direction: column; background: #1b1d29; overflow: hidden; }
.ruler { height: 13px; flex: none; background: #161c25; position: relative; overflow: hidden; }
.ruler span { position: absolute; top: 1px; font: 6px/12px var(--wide); color: #78828b; }
.ruler .major { font-size: 7px; color: #b9c2ca; }
.head-mark { position: absolute; left: 100px; top: 1px; width: 12px; height: 9px; }
.grid { position: absolute; inset: 0; width: 100%; height: 100%; }
.lane { position: relative; min-height: 0; border-bottom: 1px solid #080a12; }
.clip { position: absolute; top: 0; bottom: 0; overflow: hidden; }
.art { position: absolute; inset: 0; width: 100%; height: 100%; }
.label { position: relative; height: 10px; display: flex; align-items: center; gap: 2px; padding-left: 1px; white-space: nowrap; color: #dcdfe9; font: 8px/10px var(--narrow); }
.label.dense { font-size: 7px; gap: 1px; }
.label.cyr { font: 8px/10px var(--wide); gap: 2px; }
.playhead { position: absolute; left: 98px; top: 0; bottom: 0; width: 9px; border-right: 1px solid #b8e078; background: linear-gradient(90deg, transparent, rgba(140, 180, 30, .45)); }
.pointer { position: absolute; left: 944px; top: 489px; color: #f4f6f8; }
.wide { width: 14px; background: #34413f; }
.wide .sb { height: 13px; }
.wide .thumb { height: 21px; background: #515b5d; }
</style>
